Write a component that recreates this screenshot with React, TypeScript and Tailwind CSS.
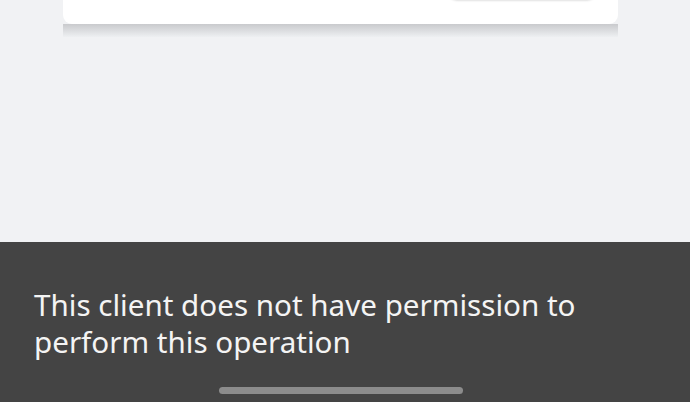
export default function App() {
  return (
    <div className="w-[690px] h-[402px] bg-[#f1f2f4] flex flex-col overflow-hidden" style={{ fontFamily: '"Noto Sans", "Open Sans", sans-serif' }}>
      <div className="h-[242px] shrink-0 relative">
        <div className="absolute left-[63px] top-[24px] w-[555px] h-[13px] bg-gradient-to-b from-[#c9cacd] to-[#eef0f2]" />
        <div className="absolute left-[63px] top-[-40px] w-[555px] h-[64px] bg-white rounded-[9px]">
          <div className="absolute left-[384px] top-[0px] w-[150px] h-[40px] rounded-[10px] bg-white shadow-[0_1px_2px_rgba(0,0,0,0.12)]" />
        </div>
      </div>
      <div className="flex-1 bg-[#444444] flex flex-col">
        <div className="pl-[34px] pt-[44px] text-[29.6px] leading-[37px] text-[#f4f4f4]">
          <p>This client does not have permission to</p>
          <p>perform this operation</p>
        </div>
        <div className="mt-auto mb-[8px] flex justify-center">
          <div className="ml-[-8px] w-[244px] h-[7px] rounded-full bg-[#8c8c8c]" />
        </div>
      </div>
    </div>
  );
}
